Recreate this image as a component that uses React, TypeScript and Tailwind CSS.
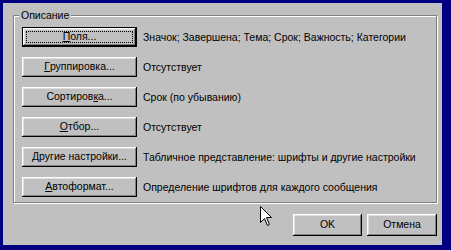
import type { ReactNode } from "react";

const rows: { label: ReactNode; value: string; isDefault?: boolean }[] = [
  { label: <><u>П</u>оля...</>, value: "Значок; Завершена; Тема; Срок; Важность; Категории", isDefault: true },
  { label: <><u>Г</u>руппировка...</>, value: "Отсутствует" },
  { label: <>Сортиров<u>к</u>а...</>, value: "Срок (по убыванию)" },
  { label: <><u>О</u>тбор...</>, value: "Отсутствует" },
  { label: <><u>Д</u>ругие настройки...</>, value: "Табличное представление: шрифты и другие настройки" },
  { label: <><u>А</u>втоформат...</>, value: "Определение шрифтов для каждого сообщения" },
];

const bevel =
  "shadow-[inset_-1px_-1px_#000,inset_1px_1px_#fff,inset_-2px_-2px_#808080,inset_2px_2px_#dfdfdf]";

function Win98Button({
  children,
  isDefault,
  className,
}: {
  children: ReactNode;
  isDefault?: boolean;
  className: string;
}) {
  if (isDefault) {
    return (
      <button
        type="button"
        className={`border border-black bg-[#c0c0c0] p-0 ${className}`}
      >
        <span
          className={`flex h-full w-full items-center justify-center p-[3px] ${bevel}`}
        >
          <span className="flex h-full w-full items-center justify-center border border-dotted border-black pb-px">
            {children}
          </span>
        </span>
      </button>
    );
  }
  return (
    <button
      type="button"
      className={`flex items-center justify-center bg-[#c0c0c0] pb-px ${bevel} ${className}`}
    >
      {children}
    </button>
  );
}

function Cursor() {
  return (
    <svg
      width="13"
      height="21"
      viewBox="0 0 13 21"
      className="absolute left-[257px] top-[203px]"
    >
      <path
        d="M0.5 0.5 L0.5 16.5 L4.5 12.5 L7.5 19.5 L9.5 18.5 L6.5 11.5 L11.5 11.5 Z"
        fill="#fff"
        stroke="#000"
        strokeWidth="1"
        strokeLinejoin="miter"
      />
    </svg>
  );
}

export default function App() {
  return (
    <div
      className="h-[250px] w-[451px] bg-[#000080] pl-[3px] pt-[3px]"
      style={{ fontFamily: '"Liberation Sans", Arial, sans-serif' }}
    >
      <div className="relative flex h-[242px] w-[439px] flex-col bg-[#c0c0c0] text-[10.5px] leading-none text-black">
        <div className="relative ml-[10px] mt-[12px] h-[188px] w-[424px] border border-[#808080] shadow-[1px_1px_0_#fff,inset_1px_1px_0_#fff]">
          <span className="absolute left-[5px] top-[-6px] bg-[#c0c0c0] px-[2px]">
            Описание
          </span>
          <div className="ml-[8px] mt-[11px] flex flex-col gap-[10px]">
            {rows.map((row, i) => (
              <div key={i} className="flex h-[20px] items-center">
                <Win98Button
                  isDefault={row.isDefault}
                  className="h-[20px] w-[115px] shrink-0"
                >
                  {row.label}
                </Win98Button>
                <span className="ml-[6px] whitespace-nowrap">{row.value}</span>
              </div>
            ))}
          </div>
        </div>
        <div className="mr-[5px] mt-[11px] flex justify-end gap-[5px]">
          <Win98Button className="h-[22px] w-[69px]">OK</Win98Button>
          <Win98Button className="h-[22px] w-[70px]">Отмена</Win98Button>
        </div>
        <Cursor />
      </div>
    </div>
  );
}
